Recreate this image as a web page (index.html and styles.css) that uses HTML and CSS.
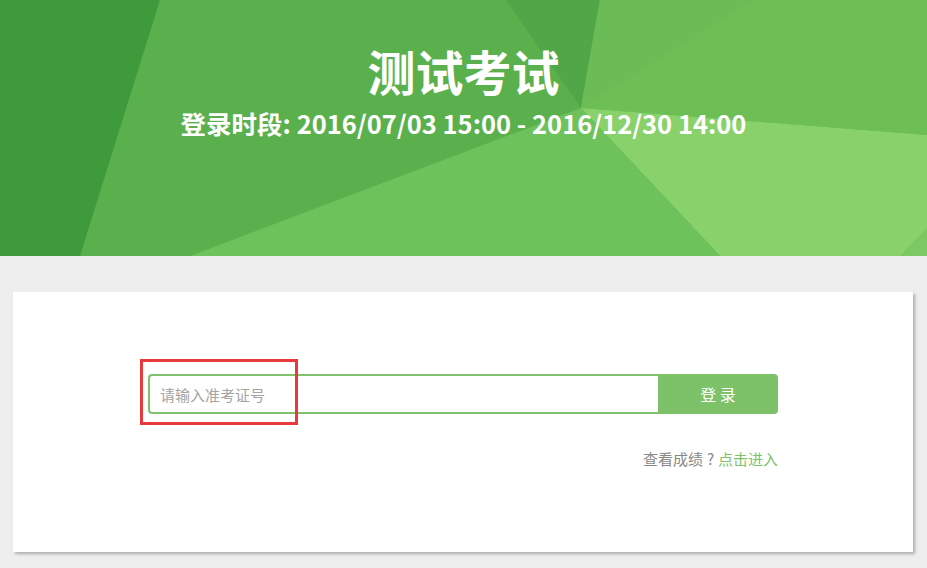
FILE: index.html
```html
<!DOCTYPE html>
<html lang="zh-CN">
<head>
<meta charset="utf-8">
<title>测试考试</title>
<link rel="stylesheet" href="styles.css">
</head>
<body>
<header class="banner">
  <svg class="banner-bg" viewBox="0 0 927 256" preserveAspectRatio="none" aria-hidden="true">
    <rect x="0" y="0" width="927" height="256" fill="#5ab04d"/>
    <polygon points="0,0 160,0 80,256 0,256" fill="#3e9a3b"/>
    <polygon points="506,0 600,0 581,108" fill="#51a747"/>
    <polygon points="600,0 927,0 927,135 581,108" fill="#6ebe56"/>
    <polygon points="600,0 753,0 581,108" fill="#6bbc57"/>
    <polygon points="581,108 927,135 927,256 720,256" fill="#89d16b"/>
    <polygon points="190,256 581,108 720,256" fill="#6ec25b"/>
    <polygon points="900,256 927,228 927,256" fill="#7cc862"/>
  </svg>
  <div class="banner-text">
    <h1 class="title">测试考试</h1>
    <p class="period">登录时段: 2016/07/03 15:00 - 2016/12/30 14:00</p>
  </div>
</header>
<main class="card">
  <form class="login" onsubmit="return false;">
    <div class="field-row">
      <input class="ticket" type="text" placeholder="请输入准考证号">
      <button class="submit" type="submit">登 录</button>
      <span class="highlight"></span>
    </div>
    <p class="score">查看成绩<span class="qmark">?</span><a class="score-link" href="#">点击进入</a></p>
  </form>
</main>
</body>
</html>
```

FILE: styles.css
```css
html, body {
  margin: 0;
  padding: 0;
}
body {
  background: #eeeeee;
  font-family: "Noto Sans CJK SC", "Liberation Sans", sans-serif;
  width: 927px;
  height: 568px;
  overflow: hidden;
}
.banner {
  position: relative;
  height: 256px;
  overflow: hidden;
}
.banner-bg {
  position: absolute;
  left: 0;
  top: 0;
  width: 100%;
  height: 100%;
  display: block;
}
.banner-text {
  position: relative;
  padding-top: 46px;
  text-align: center;
  color: #ffffff;
}
.title {
  margin: 0;
  font-size: 48px;
  line-height: 48px;
  font-weight: 700;
}
.period {
  margin: 16px 0 0;
  font-size: 25.5px;
  line-height: 25px;
  font-weight: 700;
}
.card {
  display: block;
  width: 900px;
  height: 260px;
  margin: 36px 0 0 13px;
  background: #ffffff;
  box-shadow: 2px 2px 3px rgba(0, 0, 0, 0.28);
  padding-top: 82px;
  box-sizing: border-box;
}
.login {
  width: 630px;
  margin: 0 auto;
}
.field-row {
  position: relative;
  display: flex;
  height: 40px;
}
.ticket {
  box-sizing: border-box;
  width: 510px;
  height: 40px;
  margin: 0;
  padding: 0 10px;
  border: 2px solid #80c36c;
  border-right: none;
  border-radius: 4px 0 0 4px;
  font-family: "Noto Sans CJK SC", sans-serif;
  font-size: 15px;
  color: #333;
  outline: none;
  background: #fff;
}
.ticket::placeholder {
  color: #a3a3a3;
}
.submit {
  width: 120px;
  height: 40px;
  margin: 0;
  padding: 0;
  border: none;
  border-radius: 0 4px 4px 0;
  background: #7dc268;
  color: #ffffff;
  font-family: "Noto Sans CJK SC", sans-serif;
  font-size: 16px;
  cursor: pointer;
}
.highlight {
  position: absolute;
  left: -8px;
  top: -15px;
  width: 158px;
  height: 66px;
  box-sizing: border-box;
  border: 3px solid #e8393d;
  pointer-events: none;
}
.score {
  margin: 35px 0 0;
  text-align: right;
  font-size: 15px;
  line-height: 20px;
  color: #888888;
}
.qmark {
  display: inline-block;
  width: 15px;
  text-align: center;
}
.score-link {
  color: #7dc268;
  text-decoration: none;
}
```
